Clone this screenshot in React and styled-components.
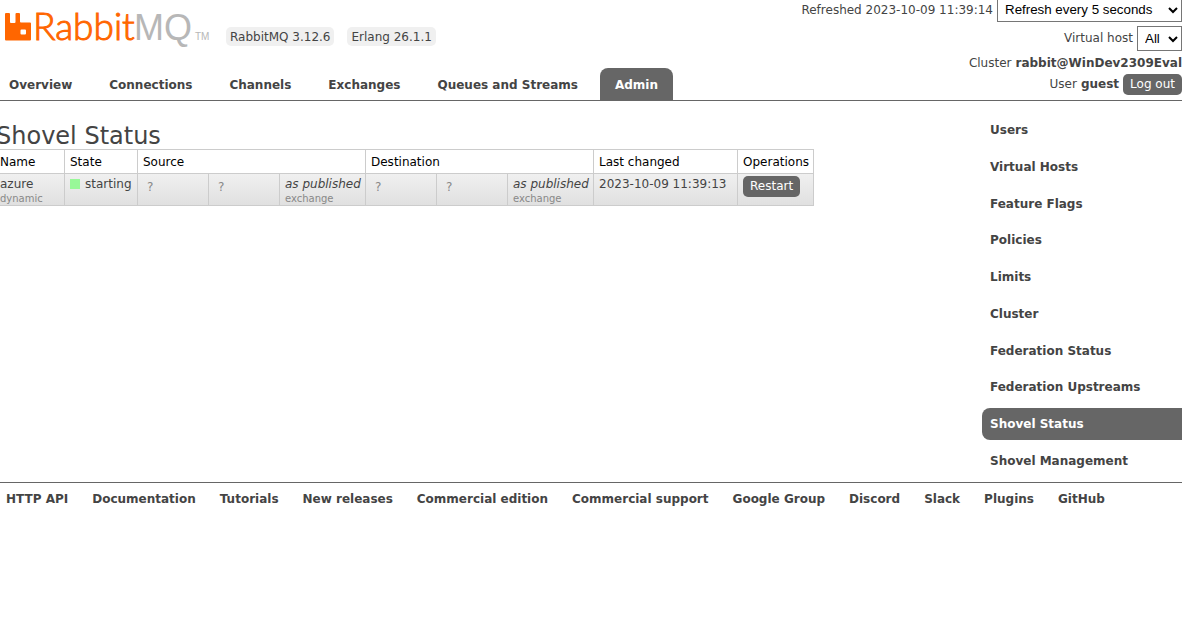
import React from "react";
import styled, { createGlobalStyle, css } from "styled-components";

const GlobalStyle = createGlobalStyle`
  * { box-sizing: border-box; }
  body {
    margin: 0 8px 0 0;
    overflow-x: hidden;
    background: #fff;
    color: #444;
    font: 12px/16px Verdana, "DejaVu Sans", sans-serif;
  }
  ul { list-style: none; margin: 0; padding: 0; }
  a { color: #444; font-weight: bold; text-decoration: none; }
`;

const Header = styled.header`
  display: flex;
  justify-content: space-between;
  height: 101px;
  border-bottom: 1px solid #666;
`;

const Brand = styled.div`
  display: flex;
  flex-direction: column;
  justify-content: space-between;
`;

const BrandRow = styled.div`
  display: flex;
  align-items: flex-start;
  padding-left: 4px;
`;

const Logo = styled.svg`
  display: block;
  width: 210px;
  height: 48px;
  margin-right: 12px;
`;

const Version = styled.span`
  height: 19px;
  margin: 27px 13px 0 0;
  padding: 2px 4px;
  border-radius: 5px;
  background: #f0f0f0;
  white-space: nowrap;
`;

const Tabs = styled.ul`
  display: flex;
  gap: 7px;
  margin-left: -6px;
`;

const TabLink = styled.a`
  display: block;
  padding: 9px 15px 7px;
  border-radius: 8px 8px 0 0;
  white-space: nowrap;
  ${(p) => p.$active && css`background: #666; color: #fff;`}
`;

const Status = styled.div`
  display: flex;
  flex-direction: column;
  align-items: flex-end;
  margin-top: -4px;
`;

const StatusRow = styled.div`
  display: flex;
  align-items: center;
  gap: 4px;
  height: ${(p) => p.$height}px;
  white-space: nowrap;
`;

const SelectBox = styled.span`
  position: relative;
  width: ${(p) => p.$width}px;

  svg {
    position: absolute;
    right: 4px;
    top: 9px;
    pointer-events: none;
  }
`;

const Select = styled.select`
  appearance: none;
  display: block;
  width: 100%;
  height: 25px;
  padding: 0 7px;
  border: 1px solid #767676;
  border-radius: 0;
  background: #fff;
  color: #000;
  font-family: "Liberation Sans", Arial, sans-serif;
`;

const Button = styled.button`
  display: block;
  height: 21px;
  padding: 0 7px;
  border: 0;
  border-radius: 5px;
  background: #666;
  color: #fff;
  font: 12px/21px Verdana, "DejaVu Sans", sans-serif;
`;

const Body = styled.div`
  display: flex;
  justify-content: space-between;
  align-items: flex-start;
  padding: 13px 0 5px;
`;

const Main = styled.main`
  margin-left: -6px;
`;

const Title = styled.h1`
  margin: 0;
  padding: 9px 0 0 2px;
  font-size: 24px;
  font-weight: normal;
  line-height: 26px;
`;

const Table = styled.table`
  width: 820px;
  table-layout: fixed;
  border-collapse: collapse;
  white-space: nowrap;

  th, td {
    padding: 2px 5px 0;
    border: 1px solid #ccc;
    text-align: left;
    vertical-align: top;
  }
  th {
    height: 24px;
    padding: 4px 5px 3px;
    color: #000;
    font-weight: normal;
  }
  td { height: 32px; }
  tbody tr { background: linear-gradient(#f0f0f0, #e0e0e0); }
`;

const Sub = styled.sub`
  display: block;
  color: #888;
  font-size: 10px;
  line-height: 13px;
`;

const Unknown = styled.span`
  display: block;
  padding: 3px 4px;
  color: #888;
`;

const State = styled.span`
  display: flex;
  align-items: center;
  gap: 5px;

  &::before {
    content: "";
    width: 10px;
    height: 10px;
    background: #98f898;
  }
`;

const SideNav = styled.ul`
  display: flex;
  flex-direction: column;
  justify-content: space-between;
  width: 200px;
  min-height: 363px;
`;

const SideLink = styled.a`
  display: block;
  padding: 8px;
  border-radius: 8px 0 0 8px;
  ${(p) => p.$active && css`background: #666; color: #fff;`}
`;

const Footer = styled.footer`
  border-top: 1px solid #666;
  padding: 8px 6px;

  ul { display: flex; gap: 24px; }
  li { white-space: nowrap; }
`;

const tabs = ["Overview", "Connections", "Channels", "Exchanges", "Queues and Streams", "Admin"];
const sideLinks = [
  "Users", "Virtual Hosts", "Feature Flags", "Policies", "Limits", "Cluster",
  "Federation Status", "Federation Upstreams", "Shovel Status", "Shovel Management",
];
const footerLinks = [
  "HTTP API", "Documentation", "Tutorials", "New releases", "Commercial edition",
  "Commercial support", "Google Group", "Discord", "Slack", "Plugins", "GitHub",
];
const columns = [70, 73, 71, 71, 86, 71, 71, 86, 144, 76];

function Dropdown({ label, width, value }) {
  return (
    <SelectBox $width={width}>
      <Select aria-label={label} defaultValue={value}>
        <option>{value}</option>
      </Select>
      <svg width="10" height="8" viewBox="0 0 10 8" aria-hidden="true">
        <path d="M1 2l4 4 4-4" fill="none" stroke="#000" strokeWidth="2" />
      </svg>
    </SelectBox>
  );
}

function Endpoint() {
  return (
    <>
      <td><Unknown>?</Unknown></td>
      <td><Unknown>?</Unknown></td>
      <td><em>as published</em><Sub>exchange</Sub></td>
    </>
  );
}

export default function App() {
  return (
    <>
      <GlobalStyle />
      <Header>
        <Brand>
          <BrandRow>
            <Logo viewBox="4 0 210 48" role="img" aria-label="RabbitMQ">
              <path
                fill="#f60"
                fillRule="evenodd"
                d="M6 13h3q1 0 1 1v8q0 1 1 1h3.500q1 0 1-1v-8q0-1 1-1h2.500q1 0 1 1v7.500q0 1 1 1h9q1 0 1 1v16q0 1-1 1H6q-1 0-1-1V14q0-1 1-1zM21.500 29.500q-1 0-1 1v3q0 1 1 1h3.500q1 0 1-1v-3q0-1-1-1z"
              />
              <text x="33" y="40" fontFamily="Lato, sans-serif" fontWeight="300" fontSize="37" fill="#f60" stroke="#f60" strokeWidth="1">Rabbit</text>
              <g fontFamily="'Liberation Sans', sans-serif" fill="#b7b7b7">
                <text x="134" y="40" fontSize="36">M</text>
                <text x="164" y="40" fontSize="36">Q</text>
                <text x="195" y="40" fontSize="10">TM</text>
              </g>
            </Logo>
            <Version>RabbitMQ 3.12.6</Version>
            <Version>Erlang 26.1.1</Version>
          </BrandRow>
          <nav>
            <Tabs>
              {tabs.map((t) => (
                <li key={t}><TabLink href="#" $active={t === "Admin"}>{t}</TabLink></li>
              ))}
            </Tabs>
          </nav>
        </Brand>
        <Status>
          <StatusRow $height={27}>
            <span>Refreshed 2023-10-09 11:39:14</span>
            <Dropdown label="Refresh interval" width={185} value="Refresh every 5 seconds" />
          </StatusRow>
          <StatusRow $height={30}>
            <span>Virtual host</span>
            <Dropdown label="Virtual host" width={45} value="All" />
          </StatusRow>
          <StatusRow $height={20}>
            <span>Cluster</span>
            <strong>rabbit@WinDev2309Eval</strong>
          </StatusRow>
          <StatusRow $height={22}>
            <span>User</span>
            <strong>guest</strong>
            <Button type="button">Log out</Button>
          </StatusRow>
        </Status>
      </Header>
      <Body>
        <Main>
          <Title>Shovel Status</Title>
          <Table>
            <colgroup>
              {columns.map((w, i) => <col key={i} width={w} />)}
            </colgroup>
            <thead>
              <tr>
                <th>Name</th>
                <th>State</th>
                <th colSpan={3}>Source</th>
                <th colSpan={3}>Destination</th>
                <th>Last changed</th>
                <th>Operations</th>
              </tr>
            </thead>
            <tbody>
              <tr>
                <td>azure<Sub>dynamic</Sub></td>
                <td><State>starting</State></td>
                <Endpoint />
                <Endpoint />
                <td>2023-10-09 11:39:13</td>
                <td><Button type="button">Restart</Button></td>
              </tr>
            </tbody>
          </Table>
        </Main>
        <nav>
          <SideNav>
            {sideLinks.map((t) => (
              <li key={t}><SideLink href="#" $active={t === "Shovel Status"}>{t}</SideLink></li>
            ))}
          </SideNav>
        </nav>
      </Body>
      <Footer>
        <ul>
          {footerLinks.map((t) => <li key={t}><a href="#">{t}</a></li>)}
        </ul>
      </Footer>
    </>
  );
}
